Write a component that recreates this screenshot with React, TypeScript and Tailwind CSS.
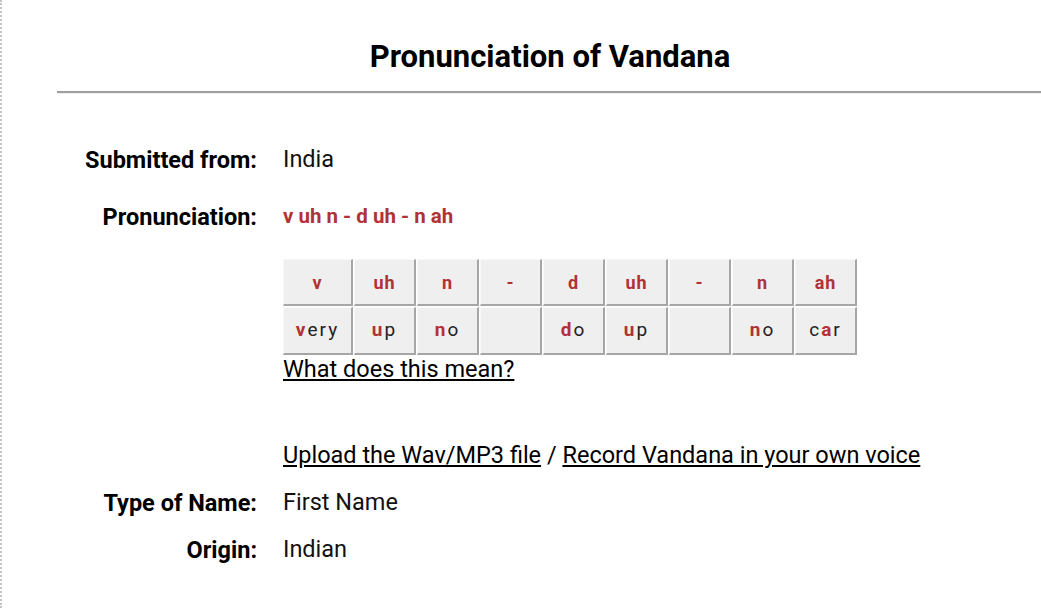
import React from 'react';

const RED = 'text-[#b03236]';

const sounds = [
  { top: 'v', bottom: [['v', true], ['ery', false]] },
  { top: 'uh', bottom: [['u', true], ['p', false]] },
  { top: 'n', bottom: [['n', true], ['o', false]] },
  { top: '-', bottom: [] },
  { top: 'd', bottom: [['d', true], ['o', false]] },
  { top: 'uh', bottom: [['u', true], ['p', false]] },
  { top: '-', bottom: [] },
  { top: 'n', bottom: [['n', true], ['o', false]] },
  { top: 'ah', bottom: [['c', false], ['a', true], ['r', false]] },
] as { top: string; bottom: [string, boolean][] }[];

const cell =
  'flex items-center justify-center bg-[#efefef] border-t border-l border-[#f8f8f8] border-r-2 border-b-2 border-r-[#a6a6a6] border-b-[#a6a6a6]';

function Row({ label, children, className = '' }: { label: string; children: React.ReactNode; className?: string }) {
  return (
    <div className={`flex items-center h-[28px] leading-[28px] ${className}`}>
      <div className="w-[255px] shrink-0 text-right text-[23.5px] font-bold text-black">{label}</div>
      <div className="ml-[26px]">{children}</div>
    </div>
  );
}

export default function App() {
  return (
    <div
      className="min-h-screen bg-white border-l-2 border-dotted border-[#c4c4c4] text-[#111]"
      style={{ fontFamily: 'Roboto, "Liberation Sans", sans-serif' }}
    >
      <h1 className="pt-[39px] pl-[57px] text-center text-[31px] font-bold leading-[36px] text-black">
        Pronunciation of Vandana
      </h1>
      <div className="ml-[55px] mt-[16px] h-[3px] border-t-2 border-[#a0a0a0] border-b border-b-[#eeeeee]" />

      <div className="pt-[52px]">
        <Row label="Submitted from:">
          <span className="text-[23.5px]">India</span>
        </Row>

        <Row label="Pronunciation:" className="mt-[29px]">
          <span className={`text-[20.5px] font-bold ${RED}`}>v uh n - d uh - n ah</span>
        </Row>

        <div className="ml-[281px] mt-[28px]">
          <div className="grid grid-cols-[70px_repeat(8,62px)] gap-px w-max">
            {sounds.map((s, i) => (
              <div key={'t' + i} className={`${cell} h-[47px] text-[18px] font-bold tracking-[1px] ${RED}`}>
                {s.top}
              </div>
            ))}
            {sounds.map((s, i) => (
              <div key={'b' + i} className={`${cell} h-[48px] text-[19px] tracking-[2px] text-[#222]`}>
                {s.bottom.map(([t, hot], j) => (
                  <span key={j} className={hot ? `font-bold ${RED}` : ''}>
                    {t}
                  </span>
                ))}
              </div>
            ))}
          </div>
          <a href="#" className="block text-[23.5px] leading-[28px] underline underline-offset-2 text-black">
            What does this mean?
          </a>
        </div>

        <div className="ml-[281px] mt-[58px] text-[23.5px] leading-[28px] text-black">
          <a href="#" className="underline underline-offset-2">Upload the Wav/MP3 file</a>
          {' / '}
          <a href="#" className="underline underline-offset-2">Record Vandana in your own voice</a>
        </div>

        <Row label="Type of Name:" className="mt-[20px]">
          <span className="text-[23.5px]">First Name</span>
        </Row>
        <Row label="Origin:" className="mt-[19px]">
          <span className="text-[23.5px]">Indian</span>
        </Row>
      </div>
    </div>
  );
}
